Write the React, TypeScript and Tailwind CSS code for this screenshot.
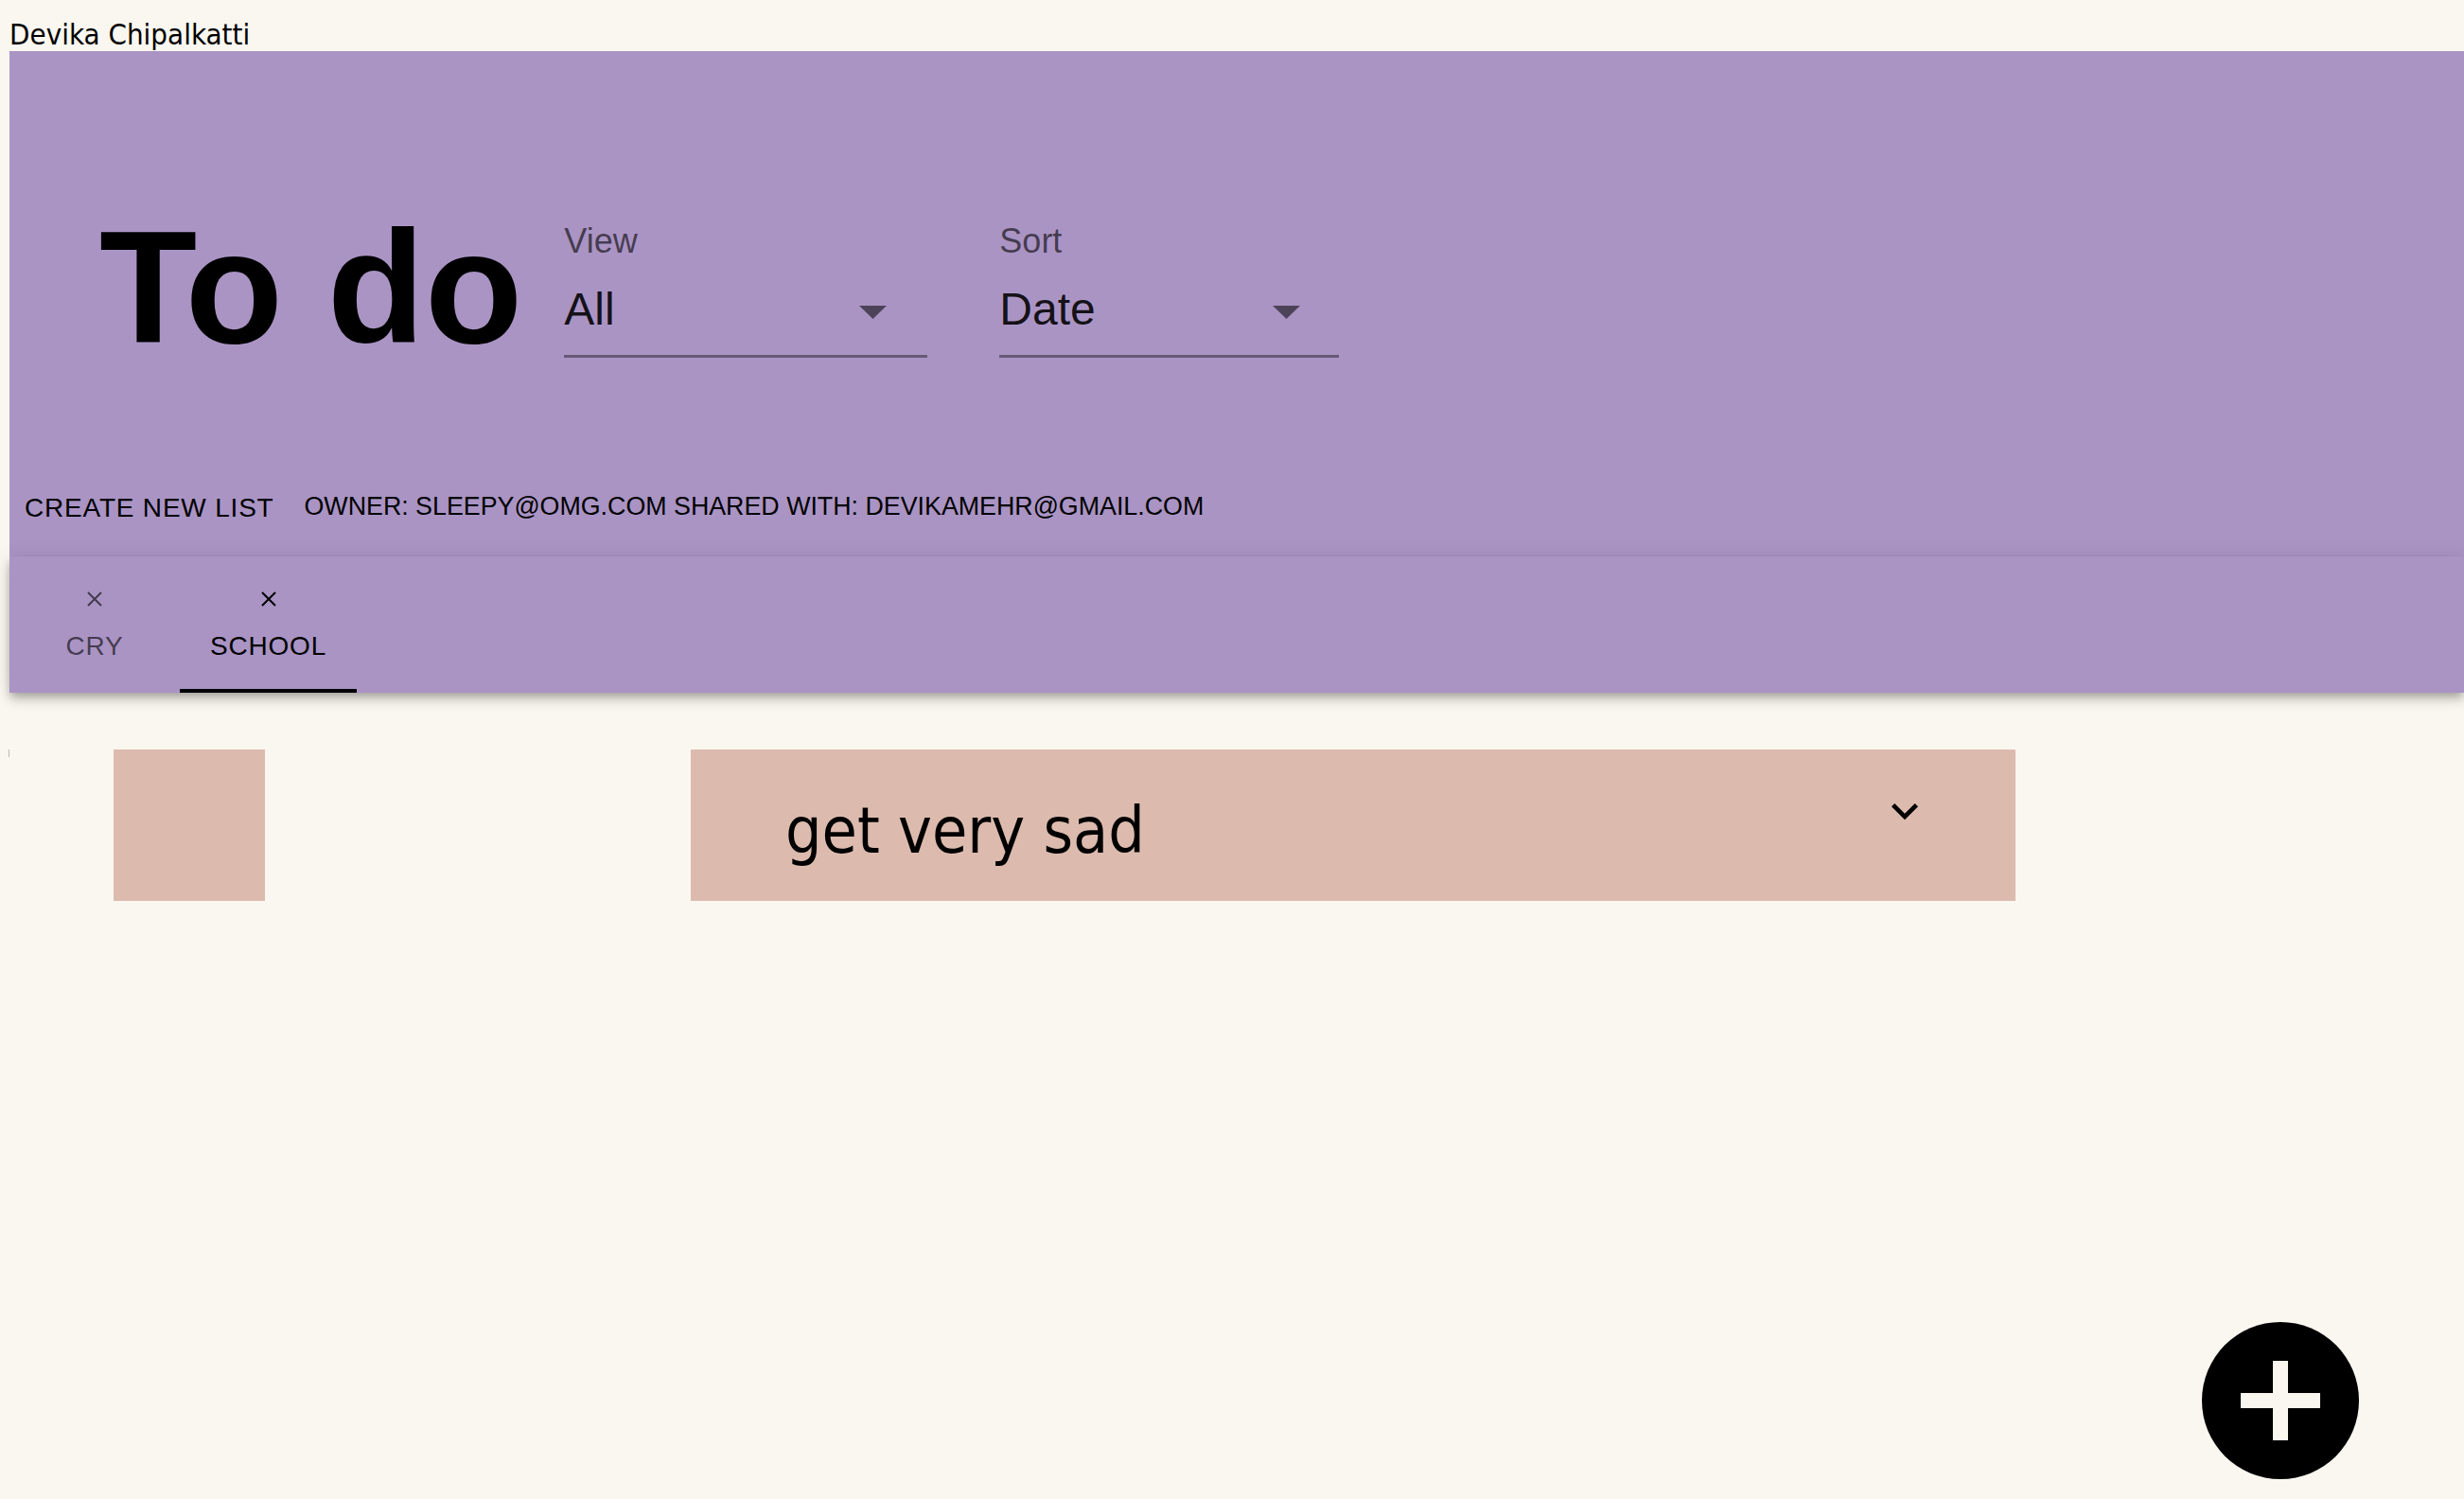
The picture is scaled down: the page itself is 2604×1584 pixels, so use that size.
import React from "react";

const tahoma = { fontFamily: "'DejaVu Sans Condensed', 'DejaVu Sans', sans-serif" };

function Select({ label, value, width, arrowRight }: { label: string; value: string; width: string; arrowRight: string }) {
  return (
    <div className={`flex flex-col ${width}`} style={{ fontFamily: "'Liberation Sans', Arial, sans-serif" }}>
      <div className="text-[36px] leading-[36px] text-black/60">{label}</div>
      <div className="mt-[30px] flex items-center justify-between">
        <span className="text-[48px] leading-[48px] text-black/90">{value}</span>
        <svg width="29" height="14" viewBox="0 0 29 14" className={`${arrowRight} mt-[6px]`}>
          <path d="M0 0 L29 0 L14.5 14 Z" fill="rgba(0,0,0,0.55)" />
        </svg>
      </div>
      <div className="mt-[24px] h-[3px] bg-black/40" />
    </div>
  );
}

function CloseX({ dim }: { dim?: boolean }) {
  return (
    <svg width="18" height="18" viewBox="0 0 18 18" className={dim ? "opacity-60" : ""}>
      <path d="M2 2 L16 16 M16 2 L2 16" stroke="black" strokeWidth="2" />
    </svg>
  );
}

export default function App() {
  return (
    <div className="min-h-screen bg-[#faf7f0] text-black">
      <div className="h-[54px] pl-[10px] pt-[20px] text-[31px] leading-[32px] font-stretch-condensed whitespace-nowrap" style={tahoma}>
        Devika Chipalkatti
      </div>

      <div className="ml-[10px]" style={{ fontFamily: "'Liberation Sans', Arial, sans-serif" }}>
        <div className="h-[534px] bg-[#aa94c4] flex flex-col">
          <div className="flex items-start pl-[95px] pt-[165px]">
            <h1 className="text-[169px] leading-[169px] font-bold tracking-normal">To do</h1>
            <div className="ml-[44px] mt-[18px] flex gap-[76px]">
              <Select label="View" value="All" width="w-[384px]" arrowRight="mr-[43px]" />
              <Select label="Sort" value="Date" width="w-[359px]" arrowRight="mr-[41px]" />
            </div>
          </div>
          <div className="mt-[112px] flex items-center">
            <button className="px-[16px] py-[12px] text-[28px] leading-[49px] tracking-[0.8px] uppercase">
              Create new list
            </button>
            <div className="ml-[16px] -mt-[2px] text-[26.8px] leading-[49px] uppercase whitespace-nowrap">
              Owner: sleepy@omg.com Shared with: devikamehr@gmail.com
            </div>
          </div>
        </div>

        <div className="relative z-10 h-[144px] bg-[#aa94c4] flex shadow-[0_4px_8px_-2px_rgba(0,0,0,0.2),0_8px_10px_0_rgba(0,0,0,0.14),0_2px_20px_0_rgba(0,0,0,0.12)]">
          <div className="relative w-[180px] flex flex-col items-center pt-[36px]">
            <CloseX dim />
            <div className="mt-[23px] text-[28px] leading-[35px] tracking-[0.8px] text-black/60">CRY</div>
          </div>
          <div className="relative px-[32px] flex flex-col items-center pt-[36px]">
            <CloseX />
            <div className="mt-[23px] text-[28px] leading-[35px] tracking-[0.8px]">SCHOOL</div>
            <div className="absolute bottom-0 left-0 right-0 h-[4px] bg-black" />
          </div>
        </div>
      </div>

      <div className="mt-[60px] flex items-start pl-[9px]">
        <div className="w-px h-[8px] bg-[#bbbbbb]" />
        <div className="ml-[110px] w-[160px] h-[160px] bg-[#dcbbae]" />
        <div className="ml-[450px] w-[1400px] h-[160px] bg-[#dcbbae] flex justify-between">
          <div className="pl-[100px] pt-[52px] text-[67.5px] leading-[68px] font-stretch-condensed whitespace-nowrap" style={tahoma}>
            get very sad
          </div>
          <svg width="56" height="56" viewBox="0 0 24 24" className="mr-[89px] mt-[37px]">
            <path d="M16.59 8.59 12 13.17 7.41 8.59 6 10l6 6 6-6z" fill="black" />
          </svg>
        </div>
      </div>

      <button className="fixed right-[111px] bottom-[21px] w-[166px] h-[166px] rounded-full bg-black flex items-center justify-center">
        <svg width="84" height="84" viewBox="0 0 84 84">
          <rect x="34" y="0" width="16" height="84" fill="#faf7f0" />
          <rect x="0" y="34" width="84" height="16" fill="#faf7f0" />
        </svg>
      </button>
    </div>
  );
}
